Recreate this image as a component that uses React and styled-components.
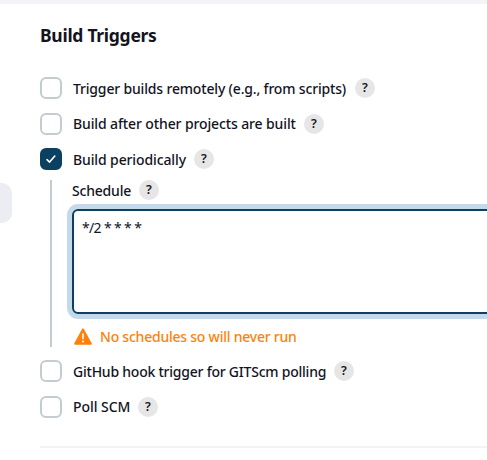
import React from "react";
import styled, { createGlobalStyle } from "styled-components";

const GlobalStyle = createGlobalStyle`
  * { box-sizing: border-box; }
  body {
    margin: 0;
    background: #fff;
    color: #14141f;
    font-family: "Noto Sans", "Open Sans", sans-serif;
    overflow: hidden;
  }
`;

const Page = styled.div`
  display: flex;
  width: 487px;
  height: 460px;
  overflow: hidden;
  border-top: 4px solid #f4f4f8;
`;

const Sidebar = styled.aside`
  flex: 0 0 40px;
  padding-top: 179px;
`;

const SidebarItem = styled.div`
  width: 12px;
  height: 40px;
  border-radius: 0 10px 10px 0;
  background: #ececf3;
`;

const Section = styled.section`
  flex: 0 0 auto;
  width: 520px;
`;

const Heading = styled.h2`
  margin: 21px 0 0;
  height: 21px;
  font-size: 17.5px;
  line-height: 21px;
  font-weight: 700;
  letter-spacing: ${(p) => p.$track}px;
  white-space: nowrap;
`;

const Options = styled.div`
  padding-top: 31px;
`;

const Option = styled.div`
  display: flex;
  align-items: center;
  height: 22px;
  margin-bottom: ${(p) => p.$after}px;
`;

const Box = styled.span`
  display: flex;
  align-items: center;
  justify-content: center;
  width: 22px;
  height: 22px;
  margin-right: 11px;
  border: 2px solid ${(p) => (p.$checked ? "#0b4060" : "#c3ccd1")};
  border-radius: 6px;
  background: ${(p) => (p.$checked ? "#0b4060" : "#fff")};
`;

const Label = styled.span`
  width: ${(p) => p.$width}px;
  padding-top: ${(p) => p.$drop || 0}px;
  font-size: 14px;
  line-height: 20px;
  font-weight: 500;
  letter-spacing: ${(p) => p.$track}px;
  white-space: nowrap;
`;

const Help = styled.span`
  width: 20px;
  height: 20px;
  margin-left: 8px;
  border-radius: 50%;
  background: #e6e6e6;
  font-size: 12.5px;
  line-height: 20px;
  font-weight: 600;
  text-align: center;
`;

const Nested = styled.div`
  display: flex;
  flex-direction: column;
  height: 167px;
  margin: 10px 0 13px 10px;
  padding-left: 20px;
  border-left: 2px solid #c3ccd1;
`;

const FieldTitle = styled.div`
  display: flex;
  height: 20px;
`;

const TextBox = styled.div`
  height: 105px;
  margin-top: 9px;
  padding: 7px 8px;
  border: 2px solid #0b4060;
  border-radius: 6px;
  box-shadow: 0 0 0 5px #c4daea;
  font-size: 14px;
  line-height: 20px;
  letter-spacing: ${(p) => p.$track}px;
`;

const Warning = styled.div`
  display: flex;
  align-items: center;
  height: 20px;
  margin-top: 13px;
  padding-left: 2px;
  color: #fe820a;
`;

const WarningIcon = styled.svg`
  width: 18px;
  height: 18px;
  margin-right: 8px;
`;

const Divider = styled.div`
  height: 2px;
  margin-top: 28px;
  background: #f2f2f7;
`;

function CheckOption({ label, width, track, checked, drop = 2, after = 0 }) {
  return (
    <Option $after={after}>
      <Box $checked={checked}>
        {checked && (
          <svg width="12" height="12" viewBox="0 0 12 12" fill="none">
            <path d="M2 6.7 4.6 9.1 9.8 3" stroke="#fff" strokeWidth="1.6" strokeLinecap="round" strokeLinejoin="round" />
          </svg>
        )}
      </Box>
      <Label $width={width} $track={track} $drop={drop}>{label}</Label>
      <Help>?</Help>
    </Option>
  );
}

export default function App() {
  return (
    <>
      <GlobalStyle />
      <Page>
        <Sidebar>
          <SidebarItem />
        </Sidebar>
        <Section>
          <Heading $track={-0.28}>Build Triggers</Heading>
          <Options>
            <CheckOption label="Trigger builds remotely (e.g., from scripts)" width={274} track={-0.17} after={14} />
            <CheckOption label="Build after other projects are built" width={223} track={-0.12} after={13} drop={0} />
            <CheckOption label="Build periodically" width={113} track={-0.12} checked />
            <Nested>
              <FieldTitle>
                <Label $width={59} $track={-0.2} $drop={1}>Schedule</Label>
                <Help>?</Help>
              </FieldTitle>
              <TextBox $track={-0.65}>*/2 * * * *</TextBox>
              <Warning>
                <WarningIcon viewBox="0 0 18 18">
                  <path d="M9 1.2 16.9 15.8H1.1Z" fill="#fe820a" stroke="#fe820a" strokeWidth="1.8" strokeLinejoin="round" />
                  <path d="M9 6v4.6" stroke="#fff" strokeWidth="1.6" strokeLinecap="round" />
                  <circle cx="9" cy="13.5" r="1" fill="#fff" />
                </WarningIcon>
                <Label $width={196} $track={-0.23}>No schedules so will never run</Label>
              </Warning>
            </Nested>
            <CheckOption label="GitHub hook trigger for GITScm polling" width={253} track={-0.23} after={14} />
            <CheckOption label="Poll SCM" width={57} track={-0.05} drop={0} />
          </Options>
          <Divider />
        </Section>
      </Page>
    </>
  );
}
